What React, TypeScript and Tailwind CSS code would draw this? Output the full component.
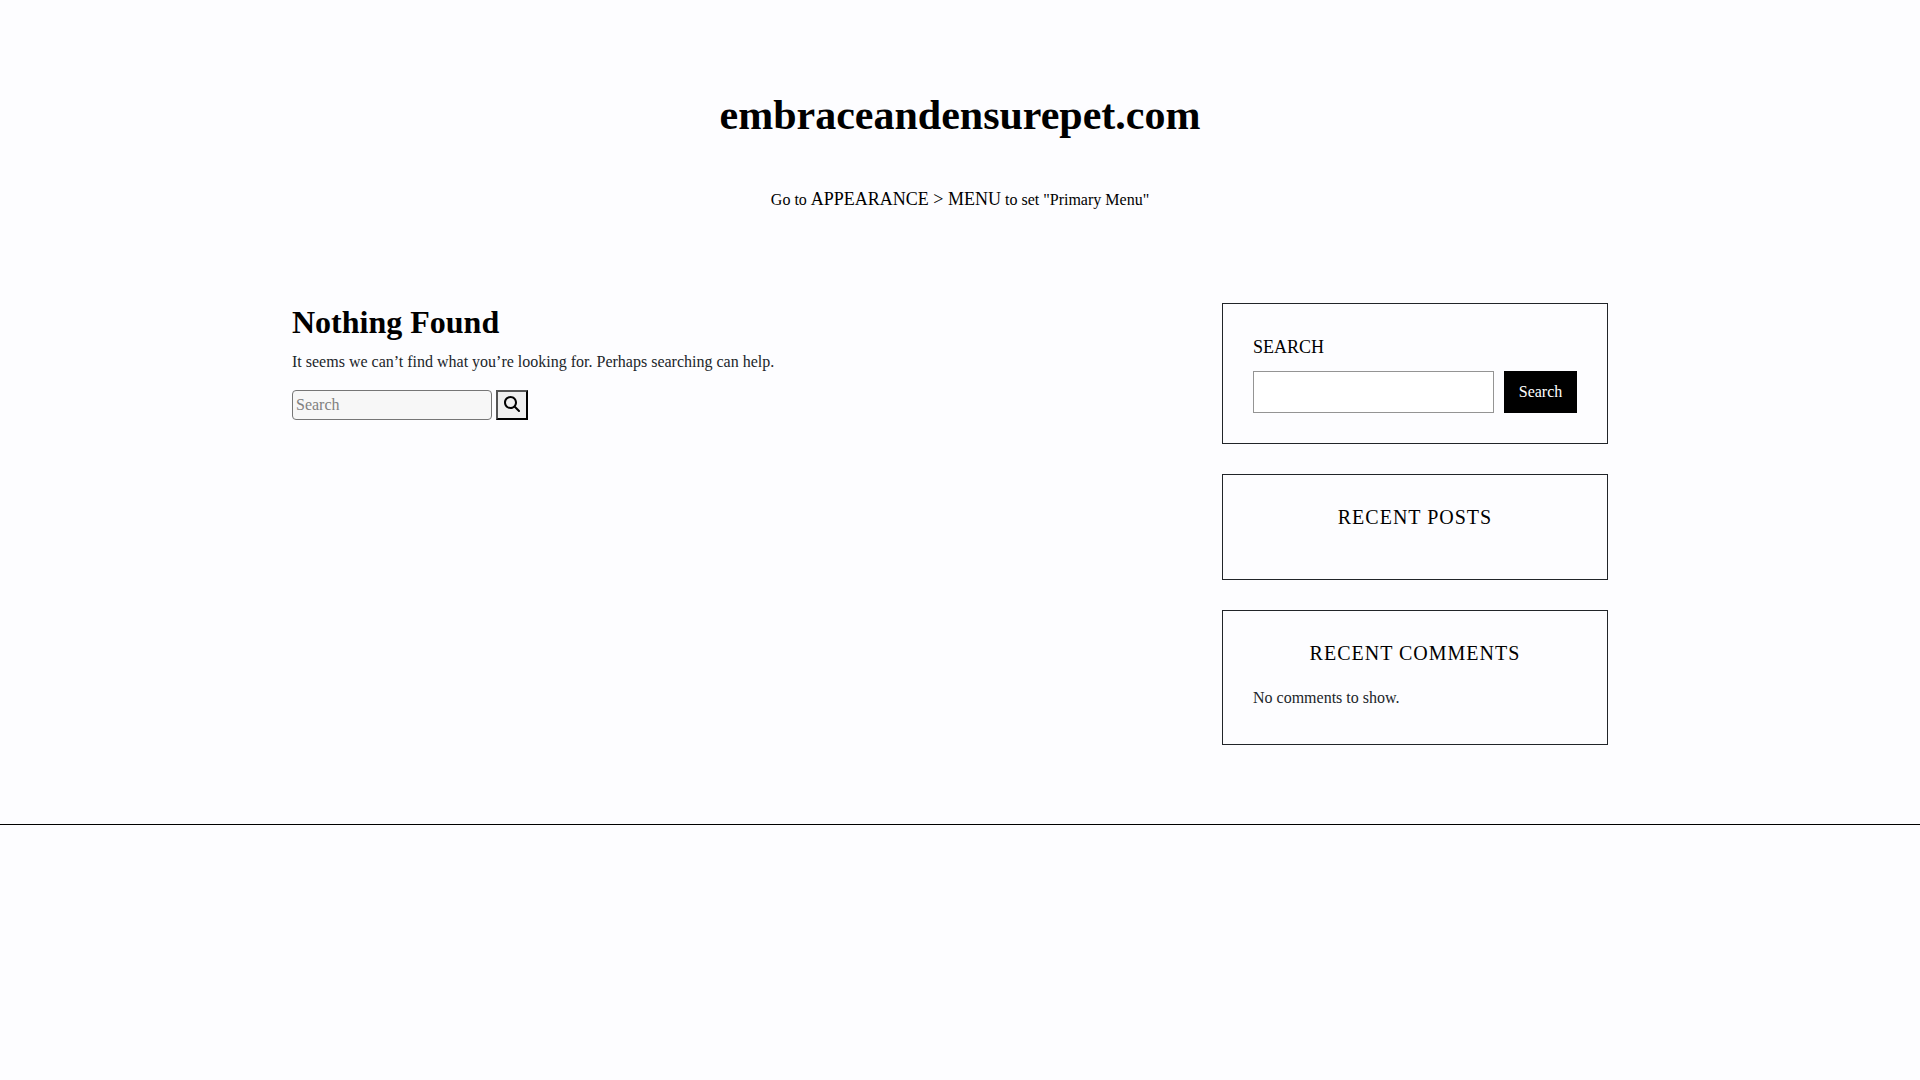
import { useState } from 'react';
import type { FormEvent, ReactNode } from 'react';
import { FaMagnifyingGlass } from 'react-icons/fa6';

function Widget({ title, children }: { title?: string; children?: ReactNode }) {
  return (
    <section className="border border-[#212529] p-[30px]">
      {title && (
        <h2 className="mb-5 text-center text-[20px] leading-6 tracking-[1px] text-black uppercase">{title}</h2>
      )}
      {children}
    </section>
  );
}

function SiteHeader() {
  return (
    <header className="px-3 pt-[90px] text-center text-black">
      <h1 className="text-[42px] leading-[50px] font-bold">
        <a href="#">embraceandensurepet.com</a>
      </h1>
      <nav className="mt-[46px] text-[16px] leading-[27px]">
        Go to <a href="#" className="text-[18px] uppercase">Appearance &gt; Menu</a> to set "Primary Menu"
      </nav>
    </header>
  );
}

export default function App() {
  const [query, setQuery] = useState('');
  const [widgetQuery, setWidgetQuery] = useState('');

  const onSubmit = (event: FormEvent) => {
    event.preventDefault();
  };

  return (
    <div className="min-h-screen bg-[#fdfdff] font-['Liberation_Serif',serif] text-[16px] text-[#212529]">
      <SiteHeader />

      <div className="mx-auto max-w-[1320px] pt-[90px] pb-[79px]">
        <div className="-ml-2 mr-3 flex items-start justify-between gap-6">
          <main>
            <h2 className="mb-2 text-[32px] leading-[38px] font-bold text-black">Nothing Found</h2>
            <p className="mb-[15px] leading-[26px]">
              It seems we can’t find what you’re looking for. Perhaps searching can help.
            </p>
            <form onSubmit={onSubmit} role="search" className="flex gap-1">
              <input
                type="search"
                aria-label="Search"
                placeholder="Search"
                value={query}
                onChange={(e) => setQuery(e.target.value)}
                className="h-[30px] w-[200px] rounded-[4px] border border-[#767676] bg-[#f7f7f7] px-[3px] placeholder:text-[#808080]"
              />
              <button
                type="submit"
                aria-label="Submit search"
                className="flex h-[30px] w-8 justify-center border-2 border-black bg-[#efefef] pt-1 text-black [border-style:outset]"
              >
                <FaMagnifyingGlass size={16} />
              </button>
            </form>
          </main>

          <aside className="w-[386px] shrink-0 space-y-[30px]">
            <Widget>
              <form onSubmit={onSubmit} role="search">
                <label htmlFor="widget-search" className="mb-[10px] block text-[18px] leading-[27px] text-black uppercase">
                  Search
                </label>
                <div className="flex gap-[10px]">
                  <input
                    id="widget-search"
                    type="search"
                    value={widgetQuery}
                    onChange={(e) => setWidgetQuery(e.target.value)}
                    className="h-[42px] min-w-0 flex-1 border border-[#949494] bg-white px-2"
                  />
                  <button type="submit" className="w-[73px] bg-black text-white">
                    Search
                  </button>
                </div>
              </form>
            </Widget>
            <Widget title="Recent Posts" />
            <Widget title="Recent Comments">
              <p className="pb-[3px] leading-[26px]">No comments to show.</p>
            </Widget>
          </aside>
        </div>
      </div>

      <footer className="border-t border-black" />
    </div>
  );
}
